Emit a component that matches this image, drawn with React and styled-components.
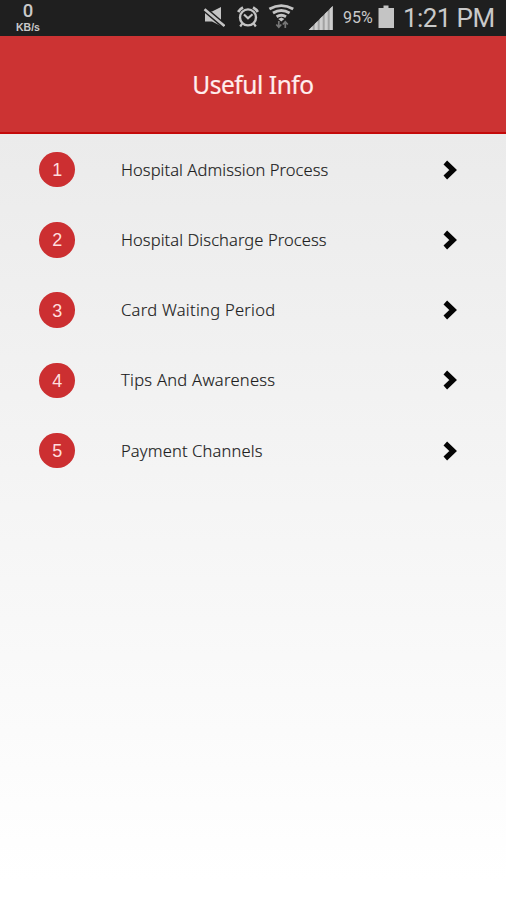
import React from 'react';
import styled, { createGlobalStyle } from 'styled-components';

const GlobalStyle = createGlobalStyle`
  * { box-sizing: border-box; }
  body { margin: 0; background: #fff; }
`;

const Screen = styled.div`
  display: flex;
  flex-direction: column;
  width: 506px;
  height: 900px;
  overflow: hidden;
  background: linear-gradient(to bottom, #ebebeb 134px, #ffffff 880px);
`;

const StatusBar = styled.div`
  display: flex;
  justify-content: space-between;
  flex: none;
  height: 36px;
  padding: 0 11px 0 14px;
  background: #1f1f1f;
  color: #c9c9c9;
  font-family: Roboto, sans-serif;
`;

const Speed = styled.div`
  display: flex;
  flex-direction: column;
  align-items: center;
  width: 28px;
  padding-top: 1px;
`;

const SpeedValue = styled.span`
  font-size: 18.5px;
  line-height: 21px;
  font-weight: 500;
`;

const SpeedUnit = styled.span`
  font-family: "Liberation Sans", sans-serif;
  font-size: 10.5px;
  line-height: 10px;
  font-weight: 700;
  white-space: nowrap;
`;

const StatusIcons = styled.div`
  display: flex;
  align-items: flex-start;
  height: 36px;
`;

const StatusIcon = styled.svg`
  display: block;
  flex: none;
  width: ${(p) => p.$w}px;
  height: 36px;
  margin-right: ${(p) => p.$gap || 0}px;
`;

const Percent = styled.span`
  width: 31px;
  margin-right: 4px;
  padding-top: 9px;
  font-size: 16px;
  line-height: 18px;
  white-space: nowrap;
`;

const Clock = styled.span`
  width: 92px;
  padding-top: 3px;
  font-size: 26px;
  line-height: 30px;
  letter-spacing: -0.6px;
  white-space: nowrap;
`;

const Header = styled.header`
  display: flex;
  align-items: center;
  justify-content: center;
  flex: none;
  height: 98px;
  padding-top: 2px;
  background: #cc3333;
  border-bottom: 2px solid #c40a0a;
`;

const Title = styled.h1`
  margin: 0;
  color: #ffeeee;
  font: 400 24.5px/34px "Noto Sans", sans-serif;
  letter-spacing: -0.45px;
  -webkit-text-stroke: 0.2px currentColor;
`;

const List = styled.ul`
  margin: 0;
  padding: 0;
  list-style: none;
`;

const Row = styled.li`
  display: flex;
  align-items: center;
  height: 70.3px;
  padding: 0 48px 0 39px;
`;

const Number = styled.span`
  display: flex;
  align-items: center;
  justify-content: center;
  flex: none;
  width: 35.5px;
  height: 35.5px;
  margin-right: 46.5px;
  border-radius: 50%;
  background: #cc2f31;
  color: #ffdede;
  font: 400 18px/20px "Liberation Sans", sans-serif;
  padding: 1px 0 0 1px;
`;

const Label = styled.span`
  flex: 1;
  color: #202020;
  font: 300 16.5px/24px "Noto Sans", sans-serif;
  letter-spacing: ${(p) => p.$spacing}px;
  white-space: nowrap;
  -webkit-text-stroke: 0.15px currentColor;
`;

const Chevron = styled.svg`
  display: block;
  width: 15px;
  height: 20px;
`;

const items = [
  { text: 'Hospital Admission Process', spacing: 0.07 },
  { text: 'Hospital Discharge Process', spacing: 0.09 },
  { text: 'Card Waiting Period', spacing: 0.29 },
  { text: 'Tips And Awareness', spacing: 0.28 },
  { text: 'Payment Channels', spacing: 0.15 },
];

const Content = styled.main`
  flex: 1;
  padding-top: 0.4px;
`;

function MuteIcon() {
  return (
    <StatusIcon $w={22} $gap={11} viewBox="-1 0 22 36">
      <path d="M1 11.5h7l9-4.5v19l-9-4.5H1z" fill="#c4c4c4" />
      <path d="M0.5 11 18 26" stroke="#1f1f1f" strokeWidth="2.4" />
      <path d="M0.5 8.3 20.5 25.2" stroke="#1f1f1f" strokeWidth="4" />
      <path d="M0.5 9.2 20.5 26" stroke="#c4c4c4" strokeWidth="2.6" />
    </StatusIcon>
  );
}

function AlarmIcon() {
  return (
    <StatusIcon $w={23} $gap={9} viewBox="-1 0 23 36" fill="none" stroke="#c4c4c4">
      <circle cx="11" cy="17.4" r="8" strokeWidth="2.4" />
      <path d="M1.2 12A10.5 10.5 0 0 1 6 7.5M20.8 12A10.5 10.5 0 0 0 16 7.5" strokeWidth="2.8" />
      <path d="m7 14.5 4 3.8 4.5-4M5.2 23.7l-2 2.8M16.8 23.7l2 2.8" strokeWidth="2.2" />
    </StatusIcon>
  );
}

function WifiIcon() {
  return (
    <StatusIcon $w={26} $gap={14} viewBox="-0.8 0 26 36" fill="none">
      <g stroke="#c4c4c4" strokeWidth="2.9">
        <path d="M0.6 9Q12.5 2.2 24.4 9" />
        <path d="M4.2 13q8.3-5 16.6 0" />
        <path d="M7.8 16.8q4.7-3 9.4 0" />
      </g>
      <path d="m9.5 19 3-1.6 3 1.6-3 2.6z" fill="#c4c4c4" />
      <path d="M10 21v6m-2.5-2.5 2.5 2.8 2.5-2.8M16.5 28v-6m-2.5 2.5 2.5-2.8 2.5 2.8" stroke="#777" strokeWidth="1.7" />
    </StatusIcon>
  );
}

function SignalIcon() {
  return (
    <StatusIcon $w={25} $gap={10} viewBox="-0.7 0 25 36">
      <path d="M0 30 24 6v24z" fill="#a2a2a2" />
      <path d="M0 30l4-4v4zM6 24l3-3v9H6zM11 19l3-3v14h-3zM16 14l3-3v19h-3zM21 9l3-3v24h-3z" fill="#cecece" />
    </StatusIcon>
  );
}

function BatteryIcon() {
  return (
    <StatusIcon $w={17} $gap={8} viewBox="0 0 17 36">
      <path d="M5.5 5.5h5V8H16v20H.5V8h5z" fill="#c4c4c4" />
    </StatusIcon>
  );
}

export default function App() {
  return (
    <>
      <GlobalStyle />
      <Screen>
        <StatusBar>
          <Speed>
            <SpeedValue>0</SpeedValue>
            <SpeedUnit>KB/s</SpeedUnit>
          </Speed>
          <StatusIcons>
            <MuteIcon />
            <AlarmIcon />
            <WifiIcon />
            <SignalIcon />
            <Percent>95%</Percent>
            <BatteryIcon />
            <Clock>1:21 PM</Clock>
          </StatusIcons>
        </StatusBar>
        <Header>
          <Title>Useful Info</Title>
        </Header>
        <Content>
          <List>
            {items.map((item, index) => (
              <Row key={item.text}>
                <Number>{index + 1}</Number>
                <Label $spacing={item.spacing}>{item.text}</Label>
                <Chevron viewBox="0 0 15 20">
                  <path d="m2.3 2.5 7.9 7.5-7.9 7.5" fill="none" stroke="#050505" strokeWidth="5.2" />
                </Chevron>
              </Row>
            ))}
          </List>
        </Content>
      </Screen>
    </>
  );
}
